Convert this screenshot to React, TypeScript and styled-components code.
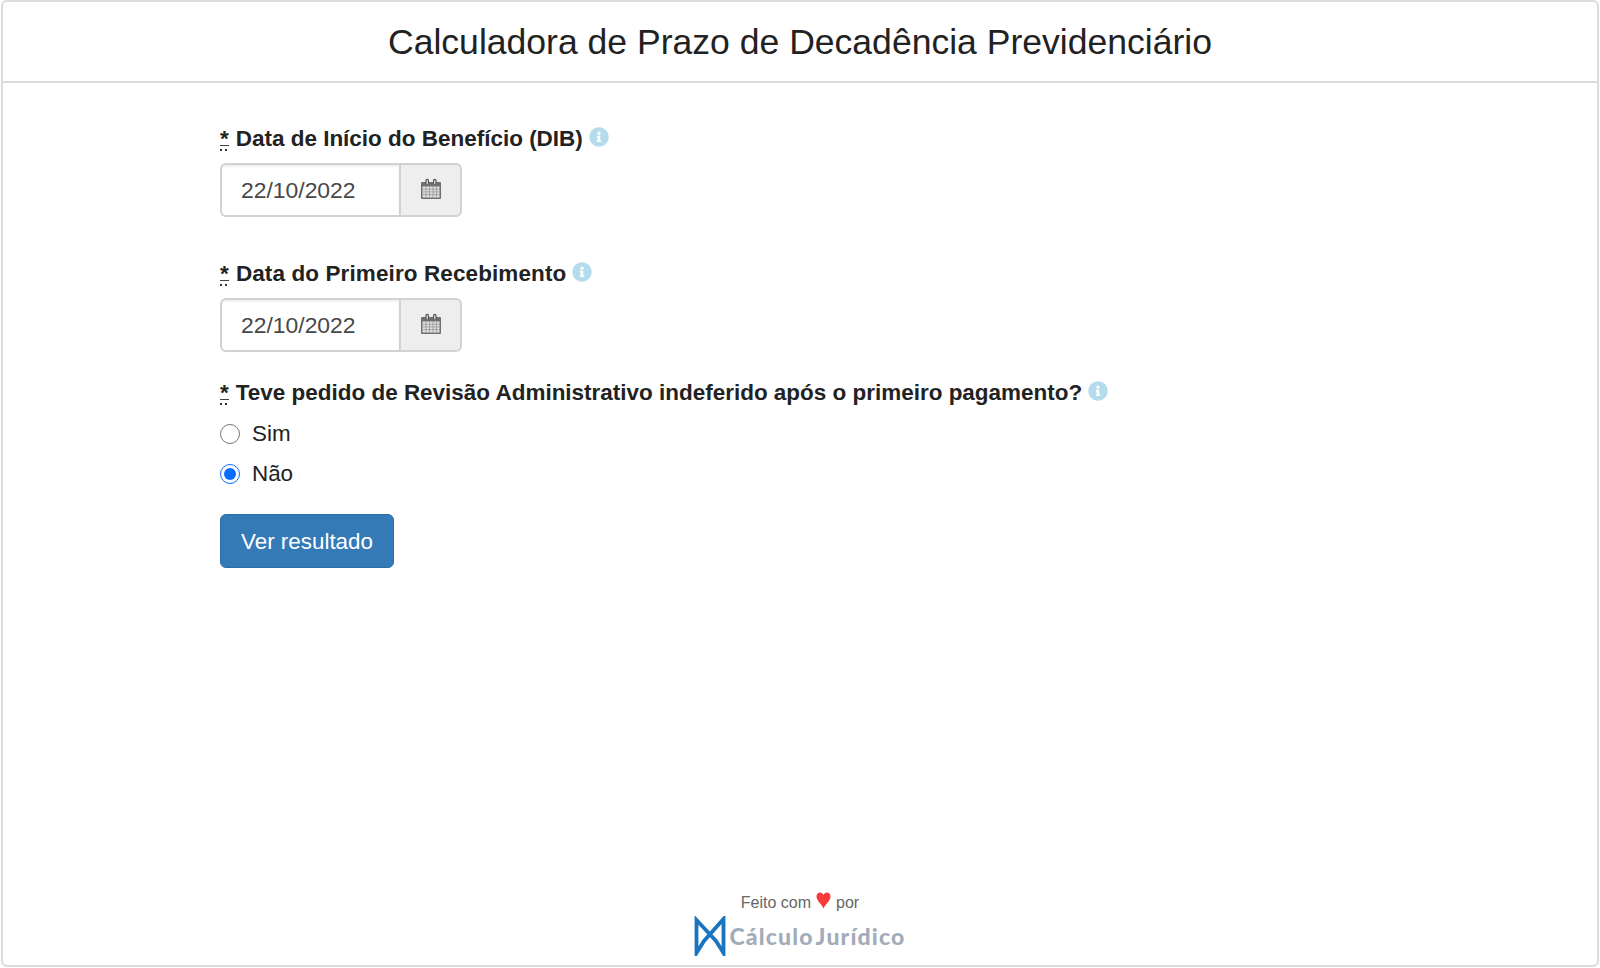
import React from "react";
import styled, { createGlobalStyle } from "styled-components";
import { FaInfoCircle } from "react-icons/fa";

const Global = createGlobalStyle`
  html, body { margin: 0; padding: 0; background: #fff; }
  body { font-family: "Liberation Sans", Arial, sans-serif; color: #212121; }
`;

const Card = styled.div`
  box-sizing: border-box;
  margin: 0 1px;
  height: 967px;
  border: 2px solid #dcdcdc;
  border-radius: 6px;
  display: flex;
  flex-direction: column;
  background: #fff;
`;

const Header = styled.header`
  box-sizing: border-box;
  height: 81px;
  padding-top: 2px;
  flex: none;
  display: flex;
  align-items: center;
  justify-content: center;
  border-bottom: 2px solid #dcdcdc;
`;

const Title = styled.h1`
  margin: 0;
  font-size: 35.55px;
  font-weight: 400;
  color: #222;
`;

const Form = styled.form`
  flex: 1;
  padding: 41px 0 0 217px;
  display: flex;
  flex-direction: column;
  align-items: flex-start;
`;

const Field = styled.div<{ $gap: number }>`
  margin-bottom: ${(p) => p.$gap}px;
`;

const Label = styled.label<{ $height: number; $tracking?: number }>`
  display: flex;
  align-items: flex-start;
  height: ${(p) => p.$height}px;
  font-size: 22.48px;
  line-height: 30px;
  font-weight: 700;
  color: #222;
  letter-spacing: ${(p) => p.$tracking ?? 0}px;
`;

const Required = styled.abbr`
  display: block;
  height: 27px;
  margin-right: 7px;
  background-image: radial-gradient(circle at 1px 1px, #333 1px, transparent 1.3px),
    linear-gradient(#444, #444);
  background-size: 5px 2px, 100% 1px;
  background-position: left bottom, left 21px;
  background-repeat: repeat-x, no-repeat;
`;

const Info = styled(FaInfoCircle)`
  width: 20px;
  height: 20px;
  margin: 3px 0 0 6px;
  color: #b4dcec;
`;

const DateGroup = styled.div`
  display: flex;
  width: 242px;
  height: 54px;
`;

const DateInput = styled.input`
  box-sizing: border-box;
  width: 179px;
  height: 54px;
  padding: 0 19px;
  border: 2px solid #d2d2d2;
  border-right: 0;
  border-radius: 6px 0 0 6px;
  box-shadow: inset 0 2px 2px rgba(0, 0, 0, 0.06);
  font: 400 22.9px "Liberation Sans", Arial, sans-serif;
  color: #484848;
  outline: none;
`;

const Addon = styled.span`
  box-sizing: border-box;
  flex: 1;
  display: flex;
  align-items: center;
  justify-content: center;
  padding-bottom: 3px;
  background: #eee;
  border: 2px solid #d2d2d2;
  border-radius: 0 6px 6px 0;
`;

const RadioRow = styled.label`
  display: flex;
  align-items: center;
  gap: 12px;
  height: 40px;
  font-size: 22.4px;
  color: #222;
`;

const Radio = styled.input`
  width: 20px;
  height: 20px;
  margin: 0;
  accent-color: #0a6cff;
`;

const SubmitButton = styled.button`
  margin-top: 20px;
  box-sizing: border-box;
  width: 174px;
  height: 54px;
  padding: 2px 0 0;
  border: 1px solid #2e6da4;
  border-radius: 6px;
  background: #337ab7;
  color: #fff;
  font: 400 22.4px "Liberation Sans", Arial, sans-serif;
`;

const Footer = styled.footer`
  flex: none;
  height: 75px;
  display: flex;
  flex-direction: column;
  align-items: center;
`;

const MadeWith = styled.div`
  display: flex;
  align-items: center;
  gap: 5px;
  height: 26px;
  font-size: 16px;
  color: #666;
`;

const Heart = styled.svg`
  margin-bottom: 6px;
`;

const Brand = styled.div`
  display: flex;
  align-items: center;
  gap: 4px;
  height: 40px;
  margin-left: -1px;
`;

const BrandName = styled.span`
  font-family: "Lato", sans-serif;
  font-weight: 900;
  font-size: 23px;
  letter-spacing: 1.15px;
  word-spacing: -4px;
  color: #a3acb9;
`;

const HeartIcon = () => (
  <Heart width="15" height="17" viewBox="0 0 15 17" aria-hidden="true">
    <path d="M7.5 16.5 C5.5 12 0.5 9 0.5 4.6 C0.5 2 2.2 0.5 4.1 0.5 C5.6 0.5 6.9 1.4 7.5 3 C8.1 1.4 9.4 0.5 10.9 0.5 C12.8 0.5 14.5 2 14.5 4.6 C14.5 9 9.5 12 7.5 16.5 Z" fill="#f63b3b" />
  </Heart>
);

const CalendarIcon = () => (
  <svg width="22" height="22" viewBox="0 0 22 22" aria-hidden="true">
    <rect x="1" y="4" width="20" height="17" rx="1" fill="#6f6f6f" />
    <rect x="2.5" y="8.5" width="17" height="11" fill="#e2e2e2" />
    <path d="M2.5 11.2h17M2.5 13.9h17M2.5 16.6h17M6 8.5v11M9.5 8.5v11M13 8.5v11M16.5 8.5v11" stroke="#9a9a9a" strokeWidth="0.9" fill="none" />
    <path d="M6 6V2.5a1.2 1.2 0 0 1 2.4 0V6M13.6 6V2.5a1.2 1.2 0 0 1 2.4 0V6" stroke="#555" strokeWidth="1.2" fill="#eee" />
  </svg>
);

const LogoMark = () => (
  <svg width="32" height="40" viewBox="0 0 32 40" aria-hidden="true">
    <path
      d="M2.5 4 V37 L10 25 L29.5 3 V37 L22 25 L2.5 4 Z"
      fill="none"
      stroke="#1b74bd"
      strokeWidth="3.8"
      strokeLinejoin="miter"
    />
  </svg>
);

export default function App() {
  return (
    <>
      <Global />
      <Card>
        <Header>
          <Title>Calculadora de Prazo de Decadência Previdenciário</Title>
        </Header>
        <Form>
          <Field $gap={42}>
            <Label $height={39}>
              <Required>*</Required>Data de Início do Benefício (DIB)<Info />
            </Label>
            <DateGroup>
              <DateInput defaultValue="22/10/2022" />
              <Addon><CalendarIcon /></Addon>
            </DateGroup>
          </Field>
          <Field $gap={26}>
            <Label $height={39} $tracking={0.12}>
              <Required>*</Required>Data do Primeiro Recebimento<Info />
            </Label>
            <DateGroup>
              <DateInput defaultValue="22/10/2022" />
              <Addon><CalendarIcon /></Addon>
            </DateGroup>
          </Field>
          <Label $height={36}>
            <Required>*</Required>Teve pedido de Revisão Administrativo indeferido após o primeiro pagamento?<Info />
          </Label>
          <RadioRow><Radio type="radio" name="rev" />Sim</RadioRow>
          <RadioRow><Radio type="radio" name="rev" defaultChecked />Não</RadioRow>
          <SubmitButton type="button">Ver resultado</SubmitButton>
        </Form>
        <Footer>
          <MadeWith>Feito com <HeartIcon /> por</MadeWith>
          <Brand>
            <LogoMark />
            <BrandName>Cálculo Jurídico</BrandName>
          </Brand>
        </Footer>
      </Card>
    </>
  );
}
